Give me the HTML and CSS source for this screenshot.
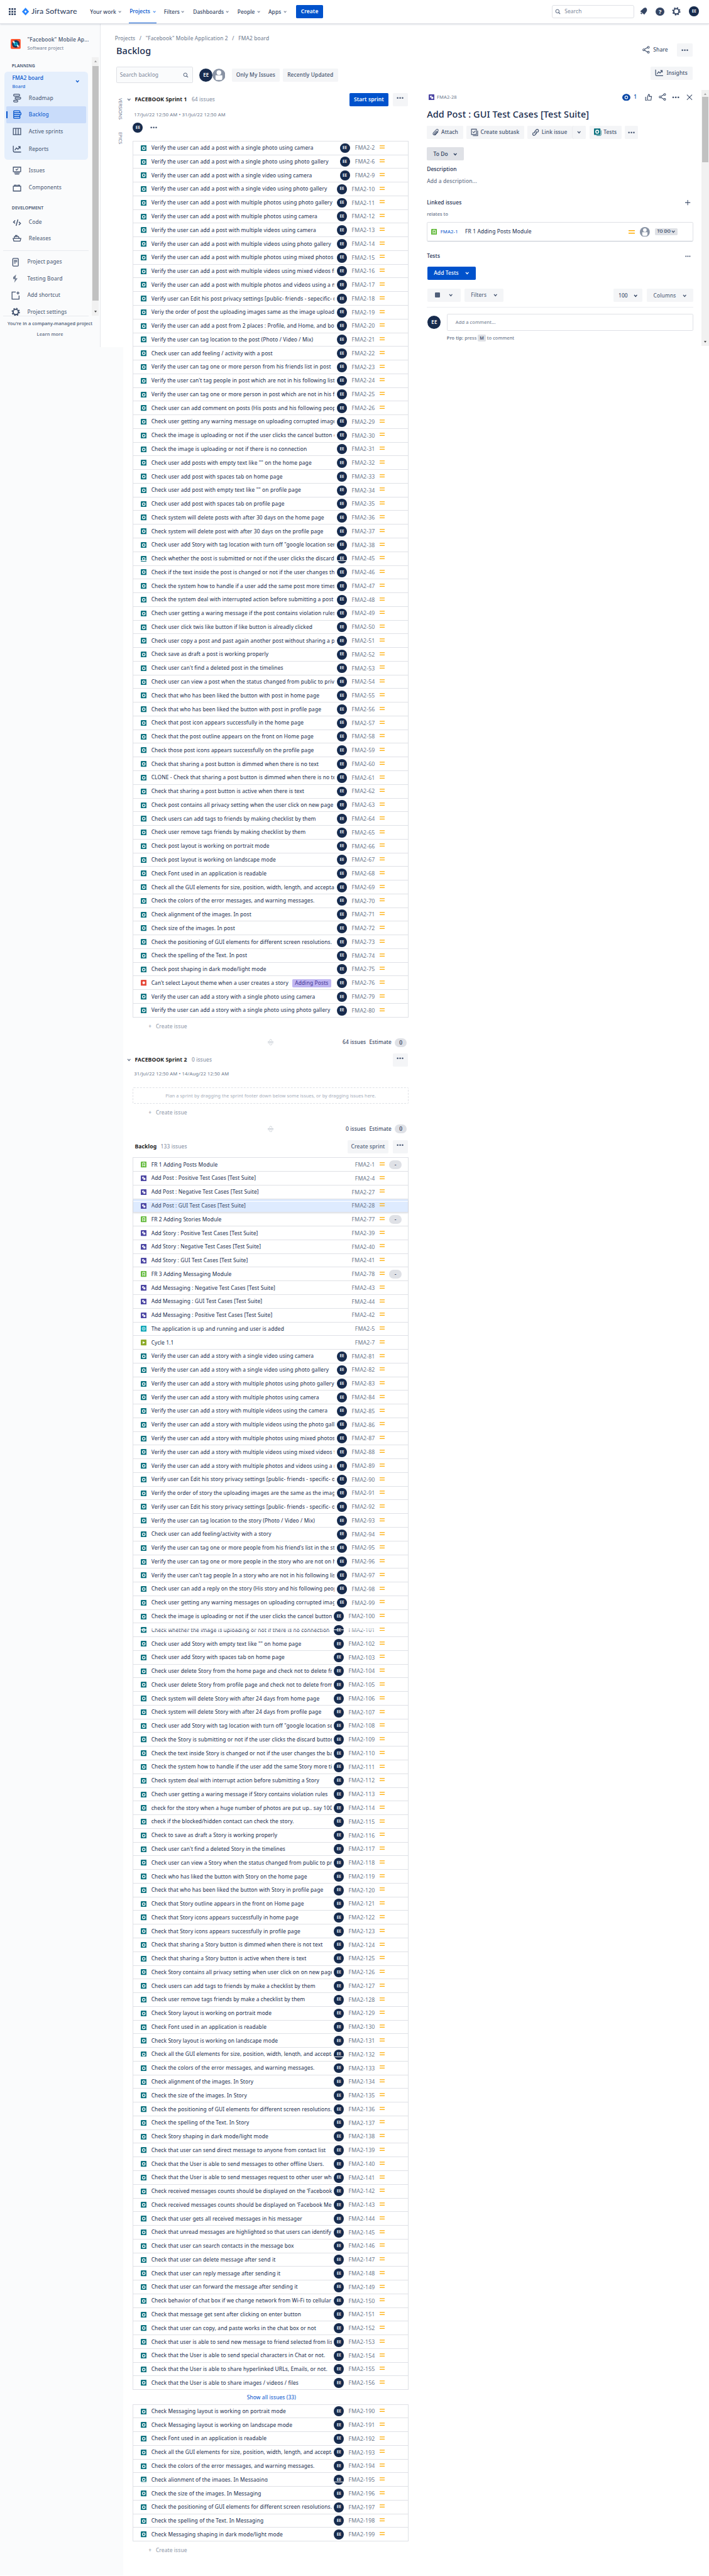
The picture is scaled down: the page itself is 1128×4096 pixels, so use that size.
FILE: index.html
```html
<!DOCTYPE html>
<html lang="en">
<head>
<meta charset="utf-8">
<title>Backlog - Jira Software</title>
<link rel="stylesheet" href="styles.css">
</head>
<body>
<svg width="0" height="0" class="defs" aria-hidden="true">
  <symbol id="chev" viewBox="0 0 10 10"><path d="M1.5 3l3.500 4 3.500-4" fill="none" stroke="currentColor" stroke-width="2"/></symbol>
  <symbol id="dots" viewBox="0 0 20 6"><circle cx="3" cy="3" r="2.300"/><circle cx="10" cy="3" r="2.300"/><circle cx="17" cy="3" r="2.300"/></symbol>
  <symbol id="mag" viewBox="0 0 16 16"><circle cx="7" cy="7" r="5" fill="none" stroke="currentColor" stroke-width="1.800"/><path d="M10.500 10.500L15 15" stroke="currentColor" stroke-width="2"/></symbol>
  <symbol id="share" viewBox="0 0 22 22"><g fill="none" stroke="currentColor" stroke-width="2"><path d="M6.500 9.500l8-5M6.500 12.500l8 5"/><circle cx="4" cy="11" r="2.600"/><circle cx="17" cy="4" r="2.600"/><circle cx="17" cy="18" r="2.600"/></g></symbol>
  <symbol id="gear" viewBox="0 0 22 22"><circle cx="11" cy="11" r="6.500" fill="none" stroke="currentColor" stroke-width="3"/><circle cx="11" cy="11" r="8.800" fill="none" stroke="currentColor" stroke-width="3" stroke-dasharray="3.500 3.410"/></symbol>
  <symbol id="user" viewBox="0 0 36 36"><circle cx="18" cy="18" r="18" fill="#8993a4"/><circle cx="18" cy="11" r="6.500" fill="#fff"/><path d="M8.500 18.500h19v8a5 5 0 0 1-5 5h-9a5 5 0 0 1-5-5z" fill="#fff"/></symbol>
  <symbol id="chart" viewBox="0 0 24 20"><path d="M2 1v14a3 3 0 0 0 3 3h18" fill="none" stroke="currentColor" stroke-width="2.200"/><path d="M6 13l4.500-6 4 3.500L20 4M15.500 3.500H20.500V9" fill="none" stroke="currentColor" stroke-width="2.200"/></symbol>
  <symbol id="prio" viewBox="0 0 14 9"><path d="M0 1.500h14M0 7.300h14" stroke="#ffab00" stroke-width="2.200"/></symbol>
  <symbol id="t-test" viewBox="0 0 16 16"><rect width="16" height="16" rx="2" fill="#0d7380"/><circle cx="8" cy="8" r="3.600" fill="none" stroke="#fff" stroke-width="2.200"/></symbol>
  <symbol id="t-bug" viewBox="0 0 16 16"><rect width="16" height="16" rx="2" fill="#e5493a"/><circle cx="8" cy="8" r="3.600" fill="#fff"/></symbol>
  <symbol id="t-story" viewBox="0 0 16 16"><rect width="16" height="16" rx="2" fill="#63ba3c"/><path d="M5 3.500h6v9l-3-3-3 3z" fill="none" stroke="#fff" stroke-width="1.700"/></symbol>
  <symbol id="t-suite" viewBox="0 0 16 16"><rect width="16" height="16" rx="2" fill="#4c46a3"/><circle cx="6.400" cy="6.200" r="3" fill="#fff"/><circle cx="9.600" cy="9.400" r="3.500" fill="#fff" stroke="#4c46a3"/></symbol>
  <symbol id="t-pre" viewBox="0 0 16 16"><rect width="16" height="16" rx="2" fill="#00a3b5"/><circle cx="8" cy="8" r="4.500" fill="none" stroke="#fff" stroke-width="1.300"/><circle cx="8" cy="8" r="2" fill="none" stroke="#fff" stroke-width="1.300"/></symbol>
  <symbol id="t-run" viewBox="0 0 16 16"><rect width="16" height="16" rx="2" fill="#8dab2b"/><path d="M5 4.500l7 3.500-7 3.500z" fill="#fff"/></symbol>
  <symbol id="grip" viewBox="0 0 16 18"><path d="M4 4.500L8 1l4 3.500M4 13.500L8 17l4-3.500M0 7.500h16M0 10.500h16" fill="none" stroke="#c1c7d0" stroke-width="1.600"/></symbol>
</svg>
<div class="page">
  <header class="top">
    <svg class="apps" viewBox="0 0 20 20"><path d="M0 2.500h5m2.500 0h5m2.500 0h5M0 10h5m2.500 0h5m2.500 0h5M0 17.500h5m2.500 0h5m2.500 0h5" stroke="#344563" stroke-width="5"/></svg>
    <svg class="mark" viewBox="0 0 20 22"><path d="M10 0l10 11-10 11L0 11z" fill="#2684ff"/><path d="M10 7.500l3.500 3.500-3.500 3.500L6.500 11z" fill="#fff"/></svg>
    <span class="brand">Jira Software</span>
    <nav>
      <a>Your work<svg><use href="#chev"/></svg></a>
      <a class="on">Projects<svg><use href="#chev"/></svg></a>
      <a>Filters<svg><use href="#chev"/></svg></a>
      <a>Dashboards<svg><use href="#chev"/></svg></a>
      <a>People<svg><use href="#chev"/></svg></a>
      <a>Apps<svg><use href="#chev"/></svg></a>
    </nav>
    <button class="btn primary create">Create</button>
    <div class="tools">
      <div class="search"><svg class="i15"><use href="#mag"/></svg>Search</div>
      <svg class="bell" viewBox="0 0 20 20"><path d="M17 1c3 3 3 7 1 10l-6 8L1 10l8-7c2-2 5-3 8-2z" fill="#344563"/><path d="M3 13l4 4-3 1-2-2z" fill="#344563"/></svg>
      <span class="help">?</span>
      <svg class="cog"><use href="#gear"/></svg>
      <span class="av">EE</span>
    </div>
  </header>
  <div class="body">
    <aside>
      <div class="project">
        <svg viewBox="0 0 27 27"><rect width="27" height="27" rx="3" fill="#ff5630"/><circle cx="14" cy="13.500" r="10.500" fill="#253858"/><path d="M7 6l4 6M21 21l-4-6" stroke="#fff" stroke-width="4"/><circle cx="14" cy="13.500" r="5" fill="#00b8d9"/><circle cx="14" cy="13.500" r="1.800" fill="#253858"/></svg>
        <div><b>"Facebook" Mobile Ap...</b><small>Software project</small></div>
      </div>
      <div class="scroller">
        <div class="menu">
          <h6>PLANNING</h6>
          <div class="board">
            <div class="boardhead"><div><b>FMA2 board</b><small>Board</small></div><svg><use href="#chev"/></svg></div>
            <a><svg viewBox="0 0 24 24"><g fill="none" stroke="currentColor" stroke-width="2.200"><rect x="3" y="1.500" width="16" height="5" rx="2"/><rect x="7" y="9.500" width="15" height="5" rx="2"/><rect x="3" y="17.500" width="11" height="5" rx="2"/></g></svg>Roadmap</a>
            <a class="on"><svg viewBox="0 0 24 24"><g fill="none" stroke="currentColor" stroke-width="2.200"><rect x="3" y="2" width="17" height="5.500" rx="1.500"/><rect x="3" y="7.500" width="20" height="5" rx="1.500"/><rect x="3" y="12.500" width="17" height="5" rx="1.500"/><rect x="3" y="17.500" width="17" height="5" rx="1.500"/></g></svg>Backlog</a>
            <a><svg viewBox="0 0 24 24"><path d="M2 3.500h20v17H2zM8.700 3.500v17M15.300 3.500v17" fill="none" stroke="currentColor" stroke-width="2.200"/></svg>Active sprints</a>
            <a class="rep"><svg viewBox="0 -2 24 24"><use href="#chart" width="24" height="20"/></svg>Reports</a>
          </div>
          <a class="iss"><svg viewBox="0 0 24 24"><path d="M2 3h20v12H2zM4 18.500h16M6 22h12" fill="none" stroke="currentColor" stroke-width="2.200"/><path d="M8.500 8.500l2.500 2.500 4.500-4.500" fill="none" stroke="currentColor" stroke-width="2"/></svg>Issues</a>
          <a><svg viewBox="0 0 24 24"><path d="M2 7h20v13H2zM5 7V4h5v3M14 7V4h5v3" fill="none" stroke="currentColor" stroke-width="2.200"/></svg>Components</a>
          <h6 class="dev">DEVELOPMENT</h6>
          <a><svg viewBox="0 0 24 24"><path d="M7 6L2.500 10.500 7 14M17 10l4.500 4-4.500 4.500M14.500 3.500l-5 17" fill="none" stroke="currentColor" stroke-width="2.400"/></svg>Code</a>
          <a><svg viewBox="0 0 24 24"><path d="M1.500 12h21l-2 7.500h-17zM5 12V7h11l2 5M8 7V4h4v3" fill="none" stroke="currentColor" stroke-width="2.200"/></svg>Releases</a>
          <hr>
          <a class="low"><svg viewBox="0 0 24 24"><rect x="4" y="1.500" width="15" height="21" rx="2" fill="none" stroke="currentColor" stroke-width="2.200"/><path d="M7 7h9M7 10.500h9M7 14h5" stroke="currentColor" stroke-width="2"/></svg>Project pages</a>
          <a class="low"><svg viewBox="0 0 24 24"><path d="M13 1L5 8v5h5l-2 10 9-12h-6z" fill="currentColor" opacity=".75"/></svg>Testing Board</a>
          <a class="low"><svg viewBox="0 0 24 24"><path d="M12 2.500H2v19h19V12M18 1v8M14 5h8" fill="none" stroke="currentColor" stroke-width="2.200"/></svg>Add shortcut</a>
          <a class="low"><svg><use href="#gear"/></svg>Project settings</a>
        </div>
        <div class="bar side"><i class="up"></i><span></span><i class="down"></i></div>
      </div>
      <div class="foot"><p>You're in a company-managed project</p><b>Learn more</b></div>
    </aside>
    <main>
      <div class="crumbs"><span>Projects</span><i>/</i><span>"Facebook" Mobile Application 2</span><i>/</i><span>FMA2 board</span></div>
      <div class="titlebar"><h1>Backlog</h1><div class="acts"><span class="sharebtn"><svg><use href="#share"/></svg>Share</span><button class="btn sq"><svg class="d"><use href="#dots"/></svg></button></div></div>
      <div class="filters">
        <div class="find">Search backlog<svg class="i15"><use href="#mag"/></svg></div>
        <span class="av big">EE</span><svg class="ghost"><use href="#user"/></svg>
        <button class="btn f1">Only My Issues</button><button class="btn f2">Recently Updated</button>
        <button class="btn ins"><svg><use href="#chart"/></svg>Insights</button>
      </div>
      <div class="cols">
        <div class="tabs"><span>VERSIONS</span><span>EPICS</span></div>
        <section class="lists">
          <div class="head"><svg class="c"><use href="#chev"/></svg><b>FACEBOOK Sprint 1</b><span>64 issues</span><button class="btn primary start">Start sprint</button><button class="btn sq"><svg class="d"><use href="#dots"/></svg></button></div>
          <div class="dates">17/Jul/22 12:50 AM • 31/Jul/22 12:50 AM</div>
          <div class="people"><span class="av">EE</span><svg class="d"><use href="#dots"/></svg></div>
          <div class="list" id="sprint1"></div>
          <div class="new"><i>+</i>Create issue</div>
          <div class="sum"><svg><use href="#grip"/></svg><span>64 issues</span><span>Estimate</span><em>0</em></div>
          <div class="head two"><svg class="c"><use href="#chev"/></svg><b>FACEBOOK Sprint 2</b><span>0 issues</span><button class="btn sq"><svg class="d"><use href="#dots"/></svg></button></div>
          <div class="dates two">31/Jul/22 12:50 AM • 14/Aug/22 12:50 AM</div>
          <div class="drop">Plan a sprint by dragging the sprint footer down below some issues, or by dragging issues here.</div>
          <div class="new"><i>+</i>Create issue</div>
          <div class="sum"><svg><use href="#grip"/></svg><span>0 issues</span><span>Estimate</span><em>0</em></div>
          <div class="head three"><b>Backlog</b><span>133 issues</span><button class="btn cs">Create sprint</button><button class="btn sq"><svg class="d"><use href="#dots"/></svg></button></div>
          <div class="list" id="backlog"></div>
          <div class="all">Show all issues (33)</div>
          <div class="list" id="tail"></div>
          <div class="new"><i>+</i>Create issue</div>
        </section>
        <section class="detail">
          <div class="inner">
            <div class="dtop"><svg class="t"><use href="#t-suite"/></svg><span>FMA2-28</span>
              <div class="dacts"><svg class="eye" viewBox="0 0 22 20"><ellipse cx="11" cy="10" rx="11" ry="9.500" fill="#0747a6"/><circle cx="11" cy="10" r="3.700" fill="none" stroke="#fff" stroke-width="2"/></svg><b>1</b>
              <svg class="like" viewBox="0 0 20 20"><path d="M7 9l3-7c3 0 3 2 2 5.500h6l-1.500 10H7zM2 8.500v9.500h3" fill="none" stroke="currentColor" stroke-width="2"/></svg>
              <svg class="sh"><use href="#share"/></svg><svg class="d"><use href="#dots"/></svg>
              <svg class="x" viewBox="0 0 16 16"><path d="M1 1l14 14M15 1L1 15" stroke="currentColor" stroke-width="1.800"/></svg></div>
            </div>
            <h2>Add Post : GUI Test Cases [Test Suite]</h2>
            <div class="dbtns">
              <button class="btn"><svg viewBox="0 0 22 22"><path d="M18 9l-7.500 8.500a4 4 0 0 1-6-5.500L13 3a3 3 0 0 1 4.500 4L9.500 16a1.500 1.500 0 0 1-2.300-2L14 7" fill="none" stroke="currentColor" stroke-width="1.800"/></svg>Attach</button>
              <button class="btn"><svg viewBox="0 0 22 22"><path d="M2 2h14v15H2zM6 20.500h13.500V6M5.500 9l3 3L13 6.500" fill="none" stroke="currentColor" stroke-width="2"/></svg>Create subtask</button>
              <button class="btn lk"><svg viewBox="0 0 22 22"><g fill="none" stroke="currentColor" stroke-width="2.200"><path d="M9.500 13.500c-3-3-1-5 1-7l2.500-3c4-3 8 1 5.500 5L16 11"/><path d="M12.500 8.500c3 3 1 5-1 7l-2.500 3c-4 3-8-1-5.500-5L6 11"/></g></svg>Link issue</button>
              <button class="btn dd"><svg class="c"><use href="#chev"/></svg></button>
              <button class="btn ts"><svg viewBox="0 0 24 24"><path d="M22 6v13a3 3 0 0 1-3 3H8" fill="none" stroke="#0d7380" stroke-width="1.500"/><rect width="20" height="20" rx="2" fill="#0d7380"/><circle cx="10" cy="10" r="4.500" fill="none" stroke="#fff" stroke-width="3"/></svg>Tests</button>
              <button class="btn mo"><svg class="d"><use href="#dots"/></svg></button>
            </div>
            <button class="btn todo">To Do<svg class="c"><use href="#chev"/></svg></button>
            <h3>Description</h3>
            <p class="ph">Add a description...</p>
            <h3 class="li">Linked issues<svg viewBox="0 0 14 14"><path d="M7 0v14M0 7h14" stroke="#42526e" stroke-width="1.800"/></svg></h3>
            <p class="rel">relates to</p>
            <div class="card"><svg class="t"><use href="#t-story"/></svg><a>FMA2-1</a><span>FR 1 Adding Posts Module</span><svg class="p"><use href="#prio"/></svg><svg class="u"><use href="#user"/></svg><em>TO DO<svg class="c"><use href="#chev"/></svg></em></div>
            <h3 class="te">Tests<svg class="d"><use href="#dots"/></svg></h3>
            <button class="btn primary add">Add Tests<svg class="c"><use href="#chev"/></svg></button>
            <div class="tbar"><button class="btn b1"><i></i><svg class="c"><use href="#chev"/></svg></button><button class="btn b2">Filters<svg class="c"><use href="#chev"/></svg></button><button class="btn b3">100<svg class="c"><use href="#chev"/></svg></button><button class="btn b4">Columns<svg class="c"><use href="#chev"/></svg></button></div>
            <div class="comment"><span class="av big">EE</span><div>Add a comment...</div></div>
            <p class="tip"><b>Pro tip:</b> press <kbd>M</kbd> to comment</p>
          </div>
          <div class="bar right"><i class="up"></i><span></span><i class="down dark"></i></div>
        </section>
      </div>
    </main>
  </div>
</div>
<script src="rows.js"></script>
</body>
</html>
```
FILE: styles.css
```css
* { box-sizing: border-box; }
body { margin: 0; background: #fff; overflow: hidden; }
.page { zoom: .5875; width: 1920px; height: 6971px; font: 14.4px/18px "Noto Sans", "Open Sans", sans-serif; letter-spacing: .19px; color: #172b4d; overflow: hidden; }
.defs { position: absolute; }
svg { flex: none; display: block; fill: currentColor; }
b { font-weight: 600; }
h1, h2, h3, h6, p { margin: 0; font-weight: 500; }
i, em { font-style: normal; }
small { font-size: 12.4px; display: block; }
.btn { display: flex; align-items: center; justify-content: center; height: 36px; border: 0; border-radius: 3px; background: #f4f5f7; color: #42526e; font: 500 14.4px/18px "Noto Sans", "Open Sans", sans-serif; letter-spacing: .19px; padding: 0; white-space: nowrap; flex: none; }
.btn.primary { background: #0052cc; color: #fff; font-weight: 600; }
.c { width: 11px; height: 11px; }
.d { width: 19px; height: 6px; color: #42526e; }
.i15 { width: 15px; height: 15px; color: #505f79; }
.av { width: 27px; height: 27px; border-radius: 50%; background: #172b4d; color: #fff; font-size: 10.5px; font-weight: 600; display: flex; align-items: center; justify-content: center; flex: none; }
.av.big { width: 36px; height: 36px; font-size: 13.5px; }

.top { display: flex; align-items: center; height: 64px; border-bottom: 1px solid #dfe1e6; box-shadow: 0 1px 4px rgba(9, 30, 66, .15); position: relative; padding: 0 27px 0 24px; color: #344563; }
.apps { width: 19px; height: 19px; margin-right: 16px; }
.mark { width: 19px; height: 22px; margin-right: 7px; }
.brand { font: 500 21px/24px Lato, sans-serif; width: 159px; letter-spacing: .25px; white-space: nowrap; }
nav { display: flex; height: 64px; width: 558px; font-weight: 500; letter-spacing: .1px; }
nav a { display: flex; align-items: center; justify-content: space-between; height: 66px; width: 85px; margin-right: 22px; white-space: nowrap; }
nav svg { width: 9px; height: 9px; color: #7a869a; }
nav a:nth-child(2) { width: 75px; margin: 0 20px 0 -2px; padding: 0 2px; border-bottom: 3px solid #0052cc; color: #0052cc; height: 63px; padding-top: 3px; }
nav a:nth-child(2) svg { color: #4c8fef; }
nav a:nth-child(3) { width: 56px; margin-right: 23px; }
nav a:nth-child(4) { width: 97px; margin-right: 23px; }
nav a:nth-child(5) { width: 62px; margin-right: 22px; }
nav a:nth-child(6) { width: 50px; margin-right: 0; }
.create { width: 73px; }
.tools { margin-left: auto; display: flex; align-items: center; }
.search { width: 224px; height: 36px; border: 2px solid #dfe1e6; border-radius: 5px; display: flex; align-items: center; gap: 10px; padding-left: 8px; color: #7a869a; margin-right: 15px; }
.bell { width: 20px; height: 20px; }
.help { width: 23px; height: 23px; border-radius: 50%; background: #344563; color: #fff; font-weight: 700; font-size: 16px; text-align: center; line-height: 23px; margin: 0 21px 0 23px; }
.cog { width: 24px; height: 24px; margin-right: 22px; }

.body { display: flex; align-items: flex-start; height: 6907px; background: linear-gradient(#fafbfc, #fafbfc) 0 876px / 334px 6031px no-repeat; }
aside { width: 272px; height: 876px; background: #fafbfc; border-right: 1px solid #e6e8ec; color: #42526e; flex: none; }
.project { display: flex; padding: 35px 0 0 29px; height: 91px; gap: 18px; }
.project svg { width: 27px; height: 27px; margin-top: 6px; }
.project b { display: block; white-space: nowrap; font-weight: 500; height: 22px; }
.project small { color: #6b778c; }
.scroller { display: flex; height: 700px; }
.menu { width: 249px; overflow: hidden; }
h6 { font-size: 11.600px; font-weight: 600; padding-left: 32px; height: 39px; line-height: 48px; }
.board { margin-left: 12px; width: 226px; height: 238px; border-radius: 9px; background: #e5effc; padding: 9px 5px 0; }
.boardhead { display: flex; justify-content: space-between; height: 40px; padding: 0 17px 0 16px; color: #0052cc; }
.boardhead b { display: block; height: 22px; font-weight: 500; }
.boardhead svg { width: 11px; height: 11px; margin-top: 12px; }
.menu a { display: flex; align-items: center; height: 45px; padding-left: 34px; gap: 20px; white-space: nowrap; }
.menu a svg { width: 24px; height: 24px; }
.menu .board a { padding-left: 17px; border-radius: 3px; position: relative; }
.board a.on { background: #c9dcfa; color: #0052cc; }
.board a.on::before { content: ""; position: absolute; left: 0; top: 14px; width: 4px; height: 18px; background: #0052cc; }
.board a.rep { margin-top: 3px; }
.menu a.iss { margin-top: 7px; margin-bottom: 2px; }
h6.dev { height: 49px; line-height: 64px; }
h6.dev + a { height: 44px; }
h6.dev + a + a { height: 44px; }
hr { border: 0; height: 2px; background: #e8eaee; margin: 9px 9px 8px; }
.menu a.low { padding-left: 30px; }
.bar { background: #f1f1f1; display: flex; flex-direction: column; align-items: center; justify-content: space-between; flex: none; }
.bar.side { width: 19px; }
.bar span { width: 17px; background: #c1c1c1; }
.side span { height: 636px; margin-bottom: 23px; margin-top: 5px; }
.up { width: 0; height: 0; border: 5px solid transparent; border-bottom: 6px solid #a3a3a3; border-top: 0; margin-top: 9px; }
.down { width: 0; height: 0; border: 5px solid transparent; border-top: 6px solid #505050; border-bottom: 0; margin-bottom: 9px; }
.foot { text-align: center; font-size: 12.400px; padding-top: 10px; border-top: 2px solid #e8eaee; margin: -1px 23px 0 9px; width: 231px; }
.foot p { white-space: nowrap; margin: 0 -11px 12px 11px; }
.foot b { color: #6b778c; display: block; margin: 0 -11px 0 11px; }

main { width: 1648px; flex: none; }
.crumbs { display: flex; height: 58px; padding: 32px 0 0 39px; color: #6b778c; white-space: nowrap; }
.crumbs i { width: 28px; text-align: center; }
.titlebar { display: flex; justify-content: space-between; padding: 0 45px 0 43px; height: 58px; }
h1 { font-size: 24.600px; line-height: 32px; font-weight: 500; }
.acts { display: flex; gap: 25px; margin-top: -5px; }
.sharebtn { display: flex; align-items: center; gap: 8px; height: 37px; font-weight: 500; color: #42526e; }
.sharebtn svg { width: 21px; height: 21px; }
.sq { width: 41px; }
.filters { display: flex; height: 72px; padding-left: 43px; align-items: flex-start; }
.find { width: 207px; height: 45px; border: 2px solid #dfe1e6; border-radius: 3px; background: #fafbfc; display: flex; align-items: center; justify-content: space-between; padding: 0 10px 0 8px; color: #7a869a; margin-right: 18px; }
.filters .av { margin-top: 5px; position: relative; }
.ghost { width: 35px; height: 36px; margin: 5px 18px 0 -1px; }
.f1 { width: 129px; margin: 5px 9px 0 0; }
.f2 { width: 149px; margin-top: 5px; }
.ins { width: 114px; margin-left: auto; margin-right: 45px; gap: 8px; }
.ins svg { width: 23px; height: 20px; }
.cols { display: flex; align-items: flex-start; }
.tabs { width: 88px; padding: 13px 0 0 45px; display: flex; flex-direction: column; align-items: flex-start; gap: 31px; margin-right: -16px; }
.tabs span { writing-mode: vertical-rl; width: 18px; font: 12.600px/18px "Open Sans", sans-serif; color: #5e6c84; letter-spacing: -.1px; height: 62px; }
.lists { width: 762px; padding-left: 16px; flex: none; }
.head { display: flex; align-items: center; height: 36px; padding-right: 2px; margin-left: -16px; white-space: nowrap; }
.head .c { margin-right: 10px; color: #6b778c; }
.head b { width: 154px; font-weight: 700; font-size: 14.700px; color: #222; }
.head span { color: #7a869a; flex: 1; }
.head .sq { margin-left: 11px; }
.head .sq svg { margin-top: -8px; }
.start { width: 106px; }
.dates { height: 20px; margin: 14px 0 10px 3px; font-size: 13px; color: #6b778c; line-height: 20px; white-space: nowrap; }
.people { display: flex; gap: 20px; align-items: center; height: 27px; margin-bottom: 22px; }
.list { border: 1px solid #dfe1e6; border-bottom: 0; }
.row { display: flex; align-items: center; height: 37.054px; border-bottom: 1px solid #dfe1e6; padding: 1px 0 0 19px; white-space: nowrap; position: relative; }
.row.sel { background: #deebff; }
.row .t { width: 16px; height: 16px; margin-right: 13px; }
.row .s { flex: 1; min-width: 0; overflow: hidden; display: flex; justify-content: space-between; margin-right: 6px; }
.row .s mark { background: #c0b6f2; color: #403294; border-radius: 3px; height: 22px; line-height: 22px; padding: 0 7px; margin-right: 10px; }
.row .s span { align-self: center; }
.row .av { margin-right: 11px; }
.row .k { color: #6b778c; font-size: 15px; text-align: right; margin-right: 12px; width: 65px; padding-top: 1px; }
.row .k.n1 { width: 57px; }
.row .k.n3 { width: 73px; }
.row .p { width: 14px; height: 9px; margin-top: -5px; }
.row .e { width: 63px; padding-left: 13px; }
.row .e em, .sum em { display: block; width: 33px; height: 24px; line-height: 24px; border-radius: 12px; background: #dfe1e6; text-align: center; font-weight: 500; }
.cut::after { content: ""; position: absolute; left: 0; right: 0; height: 2px; background: #fff; }
.cut.lo::after { top: 23px; }
.cut.hi::after { top: 16px; }
.cut.top::after { top: 6px; }
.cut.lo .s, .cut.lo .k { clip-path: inset(0 0 4px 0); }
.cut.hi .s, .cut.hi .k { clip-path: inset(5px 0 0 0); }
.new { height: 49px; line-height: 49px; color: #8993a4; display: flex; }
.new i { width: 62px; padding-left: 42px; }
.sum { height: 38px; display: flex; align-items: center; padding-right: 4px; justify-content: flex-end; gap: 9px; position: relative; }
.sum svg { width: 16px; height: 18px; margin-right: auto; margin-left: 365px; }
.head.two { margin-top: 10px; }
.dates.two { margin: 11px 0 25px 3px; }
.drop { height: 45px; border: 2px dashed #dfe1e6; border-radius: 3px; text-align: center; line-height: 41px; font-size: 12.300px; color: #a5adba; }
.drop + .new { height: 46px; line-height: 46px; }
.drop + .new + .sum { height: 44px; }
.head.three { margin-left: 5px; margin-top: 8px; margin-bottom: 11px; }
.three b { width: 70px; }
.cs { width: 111px; color: #505f79; }
.all { height: 38px; line-height: 42px; text-align: center; color: #0052cc; padding-left: 4px; }

.detail { margin-left: auto; display: flex; width: 764px; height: 694px; margin-top: -9px; }
.inner { width: 743px; padding-right: 22px; }
.dtop { display: flex; align-items: center; height: 38px; padding: 2px 1px 0 5px; color: #6b778c; font-size: 12.900px; }
.dtop .t { width: 16px; height: 16px; margin-right: 6px; }
.dacts { margin-left: auto; display: flex; align-items: center; color: #42526e; }
.eye { width: 22px; height: 20px; }
.dacts b { width: 39px; padding-left: 9px; font-size: 14.400px; color: #0747a6; font-weight: 500; }
.like { width: 20px; height: 20px; margin-right: 18px; }
.sh { width: 21px; height: 21px; margin-right: 15px; }
.dacts .d { margin-right: 18px; width: 21px; }
.x { width: 17px; height: 16px; }
h2 { font-size: 24.600px; line-height: 32px; margin: 14px 0 13px; white-space: nowrap; }
.dbtns { display: flex; margin-bottom: 23px; }
.dbtns .btn { width: 98px; margin-right: 9px; gap: 5px; }
.dbtns .btn svg:not(.c):not(.d) { width: 21px; height: 22px; }
.dbtns .btn:nth-child(2) { width: 156px; }
.dbtns .lk { width: 121px; margin-right: 1px; }
.dbtns .dd { width: 37px; box-shadow: -1px 0 #dfe1e6; }
.dbtns .ts { width: 87px; }
.dbtns .mo { width: 36px; }
.todo { width: 100px; background: #dfe1e6; color: #253858; gap: 14px; }
h3 { font-size: 14.400px; line-height: 18px; margin-top: 15px; }
.ph { margin-top: 14px; color: #6b778c; }
h3.li, h3.te { display: flex; justify-content: space-between; align-items: center; padding-right: 7px; margin-top: 40px; }
h3.li svg { width: 14px; height: 14px; }
h3.te .d { width: 15px; height: 5px; }
h3.te { margin-top: 31px; }
.rel { font-size: 12.400px; color: #5e6c84; margin: 13px 0 12px; }
.card { height: 53px; border: 1px solid #dfe1e6; border-bottom: 2px solid #c1c7d0; border-radius: 4px; display: flex; align-items: center; padding: 0 40px 0 10px; }
.card .t { width: 16px; height: 16px; margin-right: 9px; }
.card a { width: 67px; color: #0052cc; font-size: 13.200px; }
.card span { flex: 1; }
.card .p { width: 17px; height: 13px; margin-right: 15px; }
.card .u { width: 27px; height: 27px; margin-right: 13px; }
.card em { width: 62px; height: 19px; border-radius: 3px; background: #dfe1e6; font-size: 11.800px; font-weight: 600; color: #42526e; display: flex; align-items: center; justify-content: center; gap: 2px; white-space: nowrap; letter-spacing: 0; }
.btn.add { margin: 19px 0 23px 1px; width: 132px; gap: 18px; font-weight: 500; }
.tbar { display: flex; border-bottom: 2px solid #ebecf0; height: 51px; padding-left: 1px; }
.tbar i { width: 14px; height: 14px; border-radius: 2px; background: #505f79; }
.tbar .btn { font-weight: 400; }
.tbar .b1 { width: 90px; gap: 24px; margin-right: 11px; }
.tbar .b2 { width: 106px; gap: 18px; margin-right: auto; }
.tbar .b3 { width: 78px; gap: 16px; margin: 1px 12px 0 0; color: #253858; }
.tbar .b4 { width: 125px; gap: 18px; margin-top: 1px; }
.comment { display: flex; align-items: center; gap: 16px; margin: 18px 0 11px; padding-left: 2px; height: 45px; }
.comment div { flex: 1; height: 45px; border: 1px solid #dfe1e6; border-radius: 3px; padding-left: 22px; line-height: 43px; color: #6b778c; font-size: 12.800px; }
.tip { margin-left: 54px; font-size: 12.400px; color: #6b778c; }
kbd { display: inline-block; background: #dfe1e6; border-radius: 3px; font: 600 12px/18px "Noto Sans", sans-serif; width: 21px; text-align: center; color: #42526e; }
.bar.right { width: 21px; height: 694px; }
.right span { height: 177px; margin-top: 5px; margin-bottom: auto; }
```
FILE: rows.js
```js
// Each line: [type:]key number|summary|state
var sprint1 = `2|Verify the user can add a post with a single photo using camera
6|Verify the user can add a post with a single photo using photo gallery
9|Verify the user can add a post with a single video using camera
10|Verify the user can add a post with a single video using photo gallery
11|Verify the user can add a post with multiple photos using photo gallery
12|Verify the user can add a post with multiple photos using camera
13|Verify the user can add a post with multiple videos using camera
14|Verify the user can add a post with multiple videos using photo gallery
15|Verify the user can add a post with multiple photos using mixed photos
16|Verify the user can add a post with multiple videos using mixed videos from
17|Verify the user can add a post with multiple photos and videos using a mix
18|Verify user can Edit his post privacy settings [public- friends - sepecific- only
19|Veriy the order of post the uploading images same as the image uploaded
20|Verify the user can add a post from 2 places : Profile, and Home, and both
21|Verify the user can tag location to the post (Photo / Video / Mix)
22|Check user can add feeling / activity with a post
23|Verify the user can tag one or more person from his friends list in post
24|Verify the user can't tag people in post which are not in his following list
25|Verify the user can tag one or more person in post which are not in his following
26|Check user can add comment on posts (His posts and his following people
29|Check user getting any warning message on uploading corrupted images
30|Check the image is uploading or not if the user clicks the cancel button on
31|Check the image is uploading or not if there is no connection
32|Check user add posts with empty text like "" on the home page
33|Check user add post with spaces tab on home page
34|Check user add post with empty text like "" on profile page
35|Check user add post with spaces tab on profile page
36|Check system will delete posts with after 30 days on the home page
37|Check system will delete post with after 30 days on the profile page
38|Check user add Story with tag location with turn off "google location service
45|Check whether the post is submitted or not if the user clicks the discard|cut lo
46|Check if the text inside the post is changed or not if the user changes the
47|Check the system how to handle if a user add the same post more times
48|Check the system deal with interrupted action before submitting a post
49|Chech user getting a waring message if the post contains violation rules
50|Check user click twis like button if like button is alreadly clicked
51|Check user copy a post and past again another post without sharing a post
52|Check save as draft a post is working properly
53|Check user can't find a deleted post in the timelines
54|Check user can view a post when the status changed from public to private
55|Check that who has been liked the button with post in home page
56|Check that who has been liked the button with post in profile page
57|Check that post icon appears successfully in the home page
58|Check that the post outline appears on the front on Home page
59|Check those post icons appears successfully on the profile page
60|Check that sharing a post button is dimmed when there is no text
61|CLONE - Check that sharing a post button is dimmed when there is no text
62|Check that sharing a post button is active when there is text
63|Check post contains all privacy setting when the user click on new page
64|Check users can add tags to friends by making checklist by them
65|Check user remove tags friends by making checklist by them
66|Check post layout is working on portrait mode
67|Check post layout is working on landscape mode
68|Check Font used in an application is readable
69|Check all the GUI elements for size, position, width, length, and acceptance
70|Check the colors of the error messages, and warning messages.
71|Check alignment of the images. In post
72|Check size of the images. In post
73|Check the positioning of GUI elements for different screen resolutions.
74|Check the spelling of the Text. In post
75|Check post shaping in dark mode/light mode
bug:76|Can’t select Layout theme when a user creates a story
79|Verify the user can add a story with a single photo using camera
80|Verify the user can add a story with a single photo using photo gallery`;

var backlog = `story:1|FR 1 Adding Posts Module
suite:4|Add Post : Positive Test Cases [Test Suite]
suite:27|Add Post : Negative Test Cases [Test Suite]
suite:28|Add Post : GUI Test Cases [Test Suite]|sel cut top
story:77|FR 2 Adding Stories Module
suite:39|Add Story : Positive Test Cases [Test Suite]
suite:40|Add Story : Negative Test Cases [Test Suite]
suite:41|Add Story : GUI Test Cases [Test Suite]
story:78|FR 3 Adding Messaging Module
suite:43|Add Messaging : Negative Test Cases [Test Suite]
suite:44|Add Messaging : GUI Test Cases [Test Suite]
suite:42|Add Messaging : Positive Test Cases [Test Suite]
pre:5|The application is up and running and user is added
run:7|Cycle 1.1
81|Verify the user can add a story with a single video using camera
82|Verify the user can add a story with a single video using photo gallery
83|Verify the user can add a story with multiple photos using photo gallery
84|Verify the user can add a story with multiple photos using camera
85|Verify the user can add a story with multiple videos using the camera
86|Verify the user can add a story with multiple videos using the photo gallery
87|Verify the user can add a story with multiple photos using mixed photos
88|Verify the user can add a story with multiple videos using mixed videos from
89|Verify the user can add a story with multiple photos and videos using a mix
90|Verify user can Edit his story privacy settings [public- friends - specific- only
91|Verify the order of story the uploading images are the same as the image
92|Verify user can Edit his story privacy settings [public- friends - specific- only
93|Verify the user can tag location to the story (Photo / Video / Mix)
94|Check user can add feeling/activity with a story
95|Verify the user can tag one or more people from his friend's list in the story
96|Verify the user can tag one or more people in the story who are not on his
97|Verify the user can't tag people In a story who are not in his following list
98|Check user can add a reply on the story (His story and his following people
99|Check user getting any warning messages on uploading corrupted images
100|Check the image is uploading or not if the user clicks the cancel button
101|Check whether the image is uploading or not if there is no connection|cut hi
102|Check user add Story with empty text like "" on home page
103|Check user add Story with spaces tab on home page
104|Check user delete Story from the home page and check not to delete from
105|Check user delete Story from profile page and check not to delete from
106|Check system will delete Story with after 24 days from home page
107|Check system will delete Story with after 24 days from profile page
108|Check user add Story with tag location with turn off "google location service
109|Check the Story is submitting or not if the user clicks the discard button
110|Check the text inside Story is changed or not if the user changes the background
111|Check the system how to handle if the user add the same Story more times
112|Check system deal with interrupt action before submitting a Story
113|Chech user getting a waring message if Story contains violation rules
114|check for the story when a huge number of photos are put up.. say 1000
115|check if the blocked/hidden contact can check the story.
116|Check to save as draft a Story is working properly
117|Check user can't find a deleted Story in the timelines
118|Check user can view a Story when the status changed from public to private
119|Check who has liked the button with Story on the home page
120|Check that who has been liked the button with Story in profile page
121|Check that Story outline appears in the front on Home page
122|Check that Story icons appears successfully in home page
123|Check that Story icons appears successfully in profile page
124|Check that sharing a Story button is dimmed when there is not text
125|Check that sharing a Story button is active when there is text
126|Check Story contains all privacy setting when user click on on new page
127|Check users can add tags to friends by make a checklist by them
128|Check user remove tags friends by make a checklist by them
129|Check Story layout is working on portrait mode
130|Check Font used in an application is readable
131|Check Story layout is working on landscape mode
132|Check all the GUI elements for size, position, width, length, and acceptance|cut lo
133|Check the colors of the error messages, and warning messages.
134|Check alignment of the images. In Story
135|Check the size of the images. In Story
136|Check the positioning of GUI elements for different screen resolutions.
137|Check the spelling of the Text. In Story
138|Check Story shaping in dark mode/light mode
139|Check that user can send direct message to anyone from contact list
140|Check that the User is able to send messages to other offline Users.
141|Check that the User is able to send messages request to other user who
142|Check received messages counts should be displayed on the ‘Facebook
143|Check received messages counts should be displayed on ‘Facebook Messenger
144|Check that user gets all received messages in his messager
145|Check that unread messages are highlighted so that users can identify
146|Check that user can search contacts in the message box
147|Check that user can delete message after send it
148|Check that user can reply message after sending it
149|Check that user can forward the message after sending it
150|Check behavior of chat box if we change network from Wi-Fi to cellular
151|Check that message get sent after clicking on enter button
152|Check that user can copy, and paste works in the chat box or not
153|Check that user is able to send new message to friend selected from list
154|Check that the User is able to send special characters in Chat or not.
155|Check that the User is able to share hyperlinked URLs, Emails, or not.
156|Check that the User is able to share images / videos / files`;

var tail = `190|Check Messaging layout is working on portrait mode
191|Check Messaging layout is working on landscape mode
192|Check Font used in an application is readable
193|Check all the GUI elements for size, position, width, length, and acceptance
194|Check the colors of the error messages, and warning messages.
195|Check alignment of the images. In Messaging|cut lo
196|Check the size of the images. In Messaging
197|Check the positioning of GUI elements for different screen resolutions.
198|Check the spelling of the Text. In Messaging
199|Check Messaging shaping in dark mode/light mode`;

function icon(name, cls) {
  return '<svg class="' + cls + '"><use href="#' + name + '"/></svg>';
}

function render(id, text) {
  document.getElementById(id).innerHTML = text.split('\n').map(function (line) {
    var part = line.split('|');
    var ref = part[0].split(':');
    var key = ref.pop();
    var type = ref[0] || 'test';
    var assigned = type === 'test' || type === 'bug';
    return '<div class="row ' + (part[2] || '') + '">' + icon('t-' + type, 't') +
      '<div class="s"><span>' + part[1] + '</span>' + (type === 'bug' ? '<mark>Adding Posts</mark>' : '') + '</div>' +
      (assigned ? '<span class="av">EE</span>' : '') +
      '<span class="k n' + key.length + '">FMA2-' + key + '</span>' + icon('prio', 'p') +
      '<span class="e">' + (type === 'story' ? '<em>-</em>' : '') + '</span></div>';
  }).join('');
}

render('sprint1', sprint1);
render('backlog', backlog);
render('tail', tail);
```
